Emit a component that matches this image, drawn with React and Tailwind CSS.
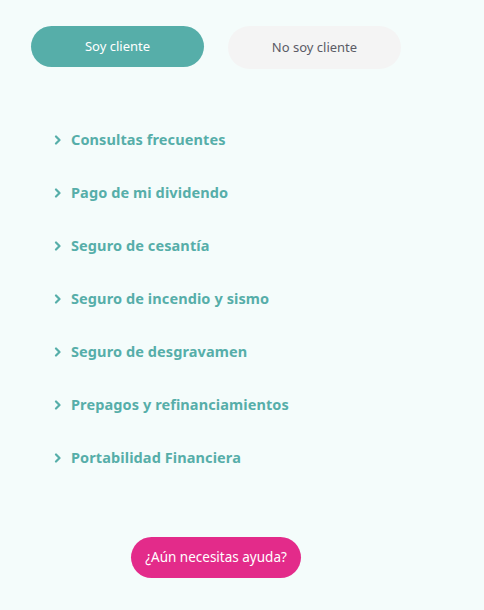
import React from 'react';

const items = [
  'Consultas frecuentes',
  'Pago de mi dividendo',
  'Seguro de cesantía',
  'Seguro de incendio y sismo',
  'Seguro de desgravamen',
  'Prepagos y refinanciamientos',
  'Portabilidad Financiera',
];

const Chevron = () => (
  <svg width="8" height="10" viewBox="0 0 8 10" className="shrink-0">
    <path d="M2 1.5 L5.5 5 L2 8.5" fill="none" stroke="#56aea9" strokeWidth="2.2" strokeLinecap="round" strokeLinejoin="round" />
  </svg>
);

const App = () => {
  return (
    <div className="w-[484px] h-[610px] bg-[#f4fcfb] overflow-hidden" style={{ fontFamily: '"Noto Sans", "Open Sans", sans-serif' }}>
      <div className="flex items-start pt-[26px] pl-[31px] gap-[24px]">
        <button className="w-[173px] h-[41px] rounded-full bg-[#56aea9] text-white text-[13px]">
          Soy cliente
        </button>
        <button className="w-[173px] h-[43px] rounded-full bg-[#f4f4f4] text-[#5b5b66] text-[13px]">
          No soy cliente
        </button>
      </div>

      <ul className="mt-[44px] pl-[54px] flex flex-col">
        {items.map((item) => (
          <li key={item} className="h-[53px] flex items-center gap-[9px]">
            <Chevron />
            <span className="text-[14.5px] font-bold text-[#56aea9] tracking-[0.1px]">{item}</span>
          </li>
        ))}
      </ul>

      <div className="mt-[53px] pl-[131px]">
        <button className="w-[170px] h-[41px] rounded-full bg-[#e32b8a] text-white text-[13.5px]">
          ¿Aún necesitas ayuda?
        </button>
      </div>
    </div>
  );
};

export default App;
